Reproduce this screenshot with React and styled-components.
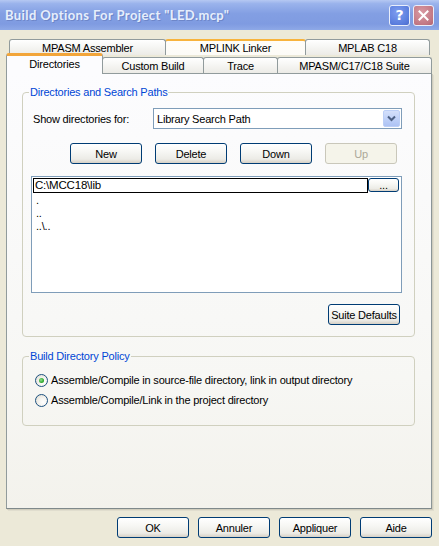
import React from "react";
import styled, { createGlobalStyle, css } from "styled-components";

const Global = createGlobalStyle`
  html, body { margin: 0; padding: 0; }
  body {
    width: 439px;
    height: 546px;
    overflow: hidden;
    background: #ece9d8;
    font-family: "Liberation Sans", Arial, sans-serif;
    font-size: 11px;
    letter-spacing: -0.2px;
    color: #000;
  }
`;

const Window = styled.div`
  width: 439px;
  height: 546px;
  display: flex;
  flex-direction: column;
  background: #ece9d8;
`;

const TitleBar = styled.div`
  height: 30px;
  flex: none;
  display: flex;
  align-items: center;
  justify-content: space-between;
  padding: 0 4px 0 5px;
  box-sizing: border-box;
  background: linear-gradient(
    180deg,
    #b5c8f2 0%,
    #9ab3ec 12%,
    #839fe3 45%,
    #7f9be1 80%,
    #8ea9e7 100%
  );
`;

const Title = styled.span`
  font-family: Lato, "Liberation Sans", sans-serif;
  font-weight: bold;
  font-size: 13px;
  color: #e6eefc;
  letter-spacing: 0.4px;
  text-shadow: 1px 1px 0 #6d86c9;
`;

const Caps = styled.div`
  display: flex;
  gap: 3px;
  margin-right: 1px;
`;

const CapButton = styled.div`
  width: 19px;
  height: 19px;
  border: 1px solid #e9eefb;
  border-radius: 3px;
  display: flex;
  align-items: center;
  justify-content: center;
  color: #fff;
  font-family: "DejaVu Sans", sans-serif;
  font-weight: bold;
  font-size: 14px;
  ${(p) =>
    p.$kind === "close"
      ? css`
          background: radial-gradient(circle at 40% 35%, #d99aa3 0%, #c27884 70%, #b46470 100%);
        `
      : css`
          background: radial-gradient(circle at 40% 35%, #7e9ef0 0%, #5a7ddd 70%, #4b6ccc 100%);
        `}
`;

const Body = styled.div`
  flex: 1;
  display: flex;
  flex-direction: column;
  padding: 9px 8px 0 6px;
`;

const TabRow = styled.div`
  display: flex;
  height: ${(p) => p.$h}px;
  align-items: flex-end;
  padding-left: ${(p) => p.$indent || 0}px;
  position: relative;
  z-index: ${(p) => (p.$front ? 2 : 1)};
`;

const Tab = styled.div`
  width: ${(p) => p.$w}px;
  height: 16px;
  box-sizing: border-box;
  border: 1px solid #919b9c;
  border-bottom: none;
  border-radius: 3px 3px 0 0;
  margin-right: -1px;
  display: flex;
  align-items: center;
  justify-content: center;
  background: linear-gradient(180deg, #ffffff 0%, #f7f7f5 40%, #ecebe6 100%);
  position: relative;
  ${(p) =>
    p.$hot &&
    css`
      border-top: 2px solid #f8b33c;
      background: linear-gradient(180deg, #fffdf8 0%, #fcfbf7 100%);
    `}
  ${(p) =>
    p.$active &&
    css`
      height: 21px;
      margin-bottom: -1px;
      padding-bottom: 3px;
      border-top: 3px solid #f2a53a;
      background: #fcfcfe;
      z-index: 3;
    `}
`;

const Panel = styled.div`
  width: 426px;
  height: 436px;
  box-sizing: border-box;
  border: 1px solid #919b9c;
  border-right-color: #8b9597;
  border-bottom-color: #7f898b;
  box-shadow: 1px 1px 0 #d0cdbd, 2px 2px 0 #e0ddce;
  background: linear-gradient(180deg, #fcfcfe 0%, #f7f7f4 70%, #f3f2ec 100%);
  padding: 12px 16px 0 15px;
  display: flex;
  flex-direction: column;
`;

const Group = styled.fieldset`
  margin: ${(p) => p.$top || 0}px 0 0 0;
  padding: 0 ${(p) => p.$pr || 0}px ${(p) => p.$pb || 0}px ${(p) => p.$pl || 0}px;
  border: 1px solid #d0d0bf;
  border-radius: 4px;
  display: flex;
  flex-direction: column;
  min-width: 0;

  & > legend {
    margin-left: ${(p) => 6 - (p.$pl || 0)}px;
  }
`;

const Legend = styled.legend`
  padding: 0 1px;
  color: #0046d5;
  line-height: 13px;
`;

const ShowRow = styled.div`
  display: flex;
  align-items: center;
  margin-top: 9px;
  padding-left: 2px;
  height: 21px;
`;

const Label = styled.span`
  width: 120px;
`;

const Select = styled.div`
  width: 249px;
  height: 21px;
  box-sizing: border-box;
  border: 1px solid #7f9db9;
  background: #fff;
  display: flex;
  align-items: center;
  padding: 1px;
`;

const SelectText = styled.span`
  flex: 1;
  padding-left: 2px;
`;

const DropButton = styled.div`
  width: 17px;
  height: 17px;
  box-sizing: border-box;
  border: 1px solid #bccff7;
  border-radius: 2px;
  background: linear-gradient(180deg, #d4e0fb 0%, #bdcff8 60%, #aec3f4 100%);
  display: flex;
  align-items: center;
  justify-content: center;
`;

const Button = styled.div`
  width: ${(p) => p.$w || 72}px;
  height: ${(p) => p.$h || 21}px;
  box-sizing: border-box;
  border: 1px solid #003c74;
  border-radius: 3px;
  display: flex;
  align-items: center;
  justify-content: center;
  background: linear-gradient(180deg, #ffffff 0%, #f7f7f4 40%, #ecebe6 80%, #d6d0c5 100%);
  color: #000;
  ${(p) =>
    p.$disabled &&
    css`
      border-color: #c9c7ba;
      background: #f5f4ea;
      color: #aca899;
    `}
`;

const ButtonRow = styled.div`
  display: flex;
  gap: 13px;
  margin-top: 14px;
  padding-left: 39px;
`;

const ListBox = styled.div`
  margin-top: 12px;
  width: 371px;
  height: 117px;
  box-sizing: border-box;
  border: 1px solid #7f9db9;
  background: #fff;
  padding: 1px 2px 0 1px;
  display: flex;
  flex-direction: column;
`;

const EditRow = styled.div`
  display: flex;
  height: 15px;
`;

const EditField = styled.div`
  width: 336px;
  box-sizing: border-box;
  border: 1px solid #000;
  line-height: 13px;
  padding-left: 1px;
  font-size: 11.5px;
`;

const ListItem = styled.div`
  line-height: 13px;
  padding-left: 3px;
`;

const Items = styled.div`
  margin-top: 1px;
`;

const Right = styled.div`
  display: flex;
  justify-content: flex-end;
  margin-top: 11px;
  padding-right: 4px;
`;

const RadioRow = styled.div`
  display: flex;
  align-items: center;
  height: 20px;
  gap: 3px;
`;

const RadioCircle = styled.span`
  width: 13px;
  height: 13px;
  box-sizing: border-box;
  border-radius: 50%;
  border: 1px solid #1c5180;
  background: radial-gradient(circle at 65% 65%, #ffffff 0%, #f3f2ee 45%, #dcd9cb 100%);
  display: flex;
  align-items: center;
  justify-content: center;
  &::after {
    content: "";
    display: ${(p) => (p.$checked ? "block" : "none")};
    width: 5px;
    height: 5px;
    border-radius: 50%;
    background: radial-gradient(circle at 40% 40%, #8de08d 0%, #2fa82f 60%, #1d8a1d 100%);
  }
`;

const Radios = styled.div`
  display: flex;
  flex-direction: column;
  margin-top: 7px;
`;

const Footer = styled.div`
  display: flex;
  justify-content: flex-end;
  gap: 9px;
  margin-top: 8px;
  margin-right: -1px;
`;

const Chevron = () => (
  <svg width="9" height="7" viewBox="0 0 9 7">
    <path d="M1 1.5 L4.5 5 L8 1.5" fill="none" stroke="#4d6185" strokeWidth="2" />
  </svg>
);

const CloseX = () => (
  <svg width="11" height="11" viewBox="0 0 11 11">
    <path d="M1.5 1.5 L9.5 9.5 M9.5 1.5 L1.5 9.5" stroke="#fff" strokeWidth="2" strokeLinecap="square" />
  </svg>
);

const backTabs = [
  { label: "MPASM Assembler", w: 157 },
  { label: "MPLINK Linker", w: 141, hot: true },
  { label: "MPLAB C18", w: 125 },
];

const frontTabs = [
  { label: "Directories", w: 97, active: true },
  { label: "Custom Build", w: 102 },
  { label: "Trace", w: 75 },
  { label: "MPASM/C17/C18 Suite", w: 155 },
];

export default function App() {
  return (
    <>
      <Global />
      <Window>
        <TitleBar>
          <Title>Build Options For Project "LED.mcp"</Title>
          <Caps>
            <CapButton>?</CapButton>
            <CapButton $kind="close">
              <CloseX />
            </CapButton>
          </Caps>
        </TitleBar>
        <Body>
          <TabRow $h={16} $indent={3}>
            {backTabs.map((t) => (
              <Tab key={t.label} $w={t.w} $hot={t.hot}>
                {t.label}
              </Tab>
            ))}
          </TabRow>
          <TabRow $h={18} $front>
            {frontTabs.map((t) => (
              <Tab key={t.label} $w={t.w} $active={t.active}>
                {t.label}
              </Tab>
            ))}
          </TabRow>
          <Panel>
            <Group $pl={8} $pr={10} $pb={11}>
              <Legend>Directories and Search Paths</Legend>
              <ShowRow>
                <Label>Show directories for:</Label>
                <Select>
                  <SelectText>Library Search Path</SelectText>
                  <DropButton>
                    <Chevron />
                  </DropButton>
                </Select>
              </ShowRow>
              <ButtonRow>
                <Button>New</Button>
                <Button>Delete</Button>
                <Button>Down</Button>
                <Button $disabled>Up</Button>
              </ButtonRow>
              <ListBox>
                <EditRow>
                  <EditField>C:\MCC18\lib</EditField>
                  <Button $w={31} $h={14}>...</Button>
                </EditRow>
                <Items>
                  <ListItem>.</ListItem>
                  <ListItem>..</ListItem>
                  <ListItem>..\..</ListItem>
                </Items>
              </ListBox>
              <Right>
                <Button>Suite Defaults</Button>
              </Right>
            </Group>
            <Group $top={13} $pl={12} $pb={15}>
              <Legend>Build Directory Policy</Legend>
              <Radios>
                <RadioRow>
                  <RadioCircle $checked />
                  <span>Assemble/Compile in source-file directory, link in output directory</span>
                </RadioRow>
                <RadioRow>
                  <RadioCircle />
                  <span>Assemble/Compile/Link in the project directory</span>
                </RadioRow>
              </Radios>
            </Group>
          </Panel>
          <Footer>
            <Button>OK</Button>
            <Button>Annuler</Button>
            <Button>Appliquer</Button>
            <Button>Aide</Button>
          </Footer>
        </Body>
      </Window>
    </>
  );
}
